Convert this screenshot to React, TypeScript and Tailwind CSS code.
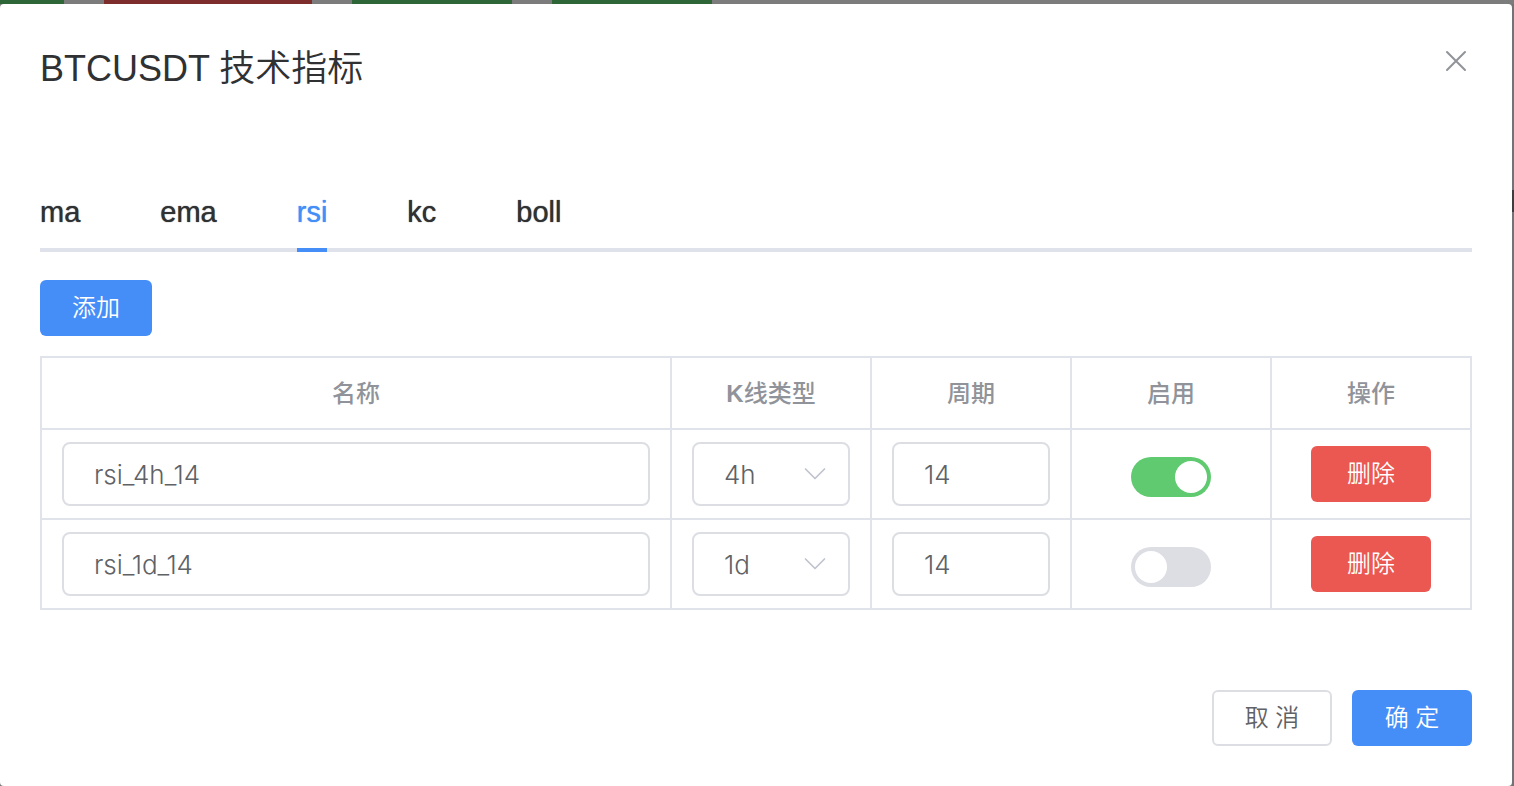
import { useState } from 'react'

type Row = { id: number; name: string; interval: string; period: string; enabled: boolean }

const tabs = ['ma', 'ema', 'rsi', 'kc', 'boll']
const intervals = ['1m', '5m', '15m', '1h', '4h', '1d']
const headings = [
  { key: 'name', label: '名称' },
  { key: 'interval', label: <><b>K</b>线类型</> },
  { key: 'period', label: '周期' },
  { key: 'enabled', label: '启用' },
  { key: 'actions', label: '操作' },
]
const cell = 'border-b-2 border-r-2 border-[#e0e4ea] px-5'
const field =
  'block h-16 w-full appearance-none rounded-lg border-2 border-[#dcdee3] bg-white pl-[30px] font-["Inter","Noto_Sans_CJK_SC",sans-serif] text-[26px] font-light text-[#606266] outline-none'

function BackdropTop() {
  return (
    <div className="flex h-1" aria-hidden="true">
      <div className="w-16 bg-[#2f6638]" />
      <div className="w-10" />
      <div className="w-52 bg-[#7d2e2c]" />
      <div className="w-10" />
      <div className="w-40 bg-[#2f6638]" />
      <div className="w-10" />
      <div className="w-40 bg-[#2f6638]" />
    </div>
  )
}

export default function App() {
  const [active, setActive] = useState('rsi')
  const [rows, setRows] = useState<Row[]>([
    { id: 1, name: 'rsi_4h_14', interval: '4h', period: '14', enabled: true },
    { id: 2, name: 'rsi_1d_14', interval: '1d', period: '14', enabled: false },
  ])
  const update = (id: number, patch: Partial<Row>) =>
    setRows(rows.map((r) => (r.id === id ? { ...r, ...patch } : r)))
  const add = () =>
    setRows([...rows, { id: Date.now(), name: '', interval: '4h', period: '14', enabled: false }])

  return (
    <div className='flex min-h-screen flex-col bg-[#7c7c7c] font-["Liberation_Sans","Noto_Sans_CJK_SC",sans-serif]'>
      <BackdropTop />
      <div className="flex grow">
        <div role="dialog" aria-labelledby="title" className="min-w-0 grow rounded bg-white px-10 pb-10 pt-10">
          <header className="flex h-12 items-start justify-between">
            <h1 id="title" className="text-4xl leading-[50px] text-[#303133]">
              BTCUSDT <span className="font-[350]">技术指标</span>
            </h1>
            <button type="button" aria-label="关闭" className="flex size-8 items-center justify-center text-[#909399]">
              <svg viewBox="0 0 24 24" className="size-6" fill="none" stroke="currentColor" strokeWidth="2" strokeLinecap="round">
                <path d="M3 4 21 22M21 4 3 22" />
              </svg>
            </button>
          </header>

          <nav role="tablist" className="mt-20 flex h-20 gap-20 text-[29px] shadow-[inset_0_-4px_0_#dfe2eb]">
            {tabs.map((t) => (
              <button
                key={t}
                type="button"
                role="tab"
                aria-selected={t === active}
                onClick={() => setActive(t)}
                className={
                  t === active
                    ? 'border-b-4 border-[#458ef7] pt-1.5 text-[#458ef7] [text-shadow:0_0_1px_currentColor]'
                    : 'border-b-4 border-transparent pt-1.5 text-[#303133] [text-shadow:0_0_1px_currentColor]'
                }
              >
                {t}
              </button>
            ))}
          </nav>

          <button type="button" onClick={add} className="mt-7 h-14 rounded-md bg-[#458ef7] px-8 text-2xl font-[350] text-white">
            添加
          </button>

          <table className="mt-5 w-full table-fixed border-separate border-spacing-0 border-l-2 border-t-2 border-[#e0e4ea]">
            <colgroup>
              <col />
              <col className="w-[200px]" />
              <col className="w-[200px]" />
              <col className="w-[200px]" />
              <col className="w-[200px]" />
            </colgroup>
            <thead>
              <tr className="h-[72px] text-2xl text-[#909399]">
                {headings.map((h) => (
                  <th key={h.key} scope="col" className={`${cell} pt-0.5 font-medium`}>
                    {h.label}
                  </th>
                ))}
              </tr>
            </thead>
            <tbody>
              {rows.map((r) => (
                <tr key={r.id} className="h-[90px]">
                  <td className={cell}>
                    <input aria-label="名称" className={field} value={r.name} onChange={(e) => update(r.id, { name: e.target.value })} />
                  </td>
                  <td className={cell}>
                    <div className="relative">
                      <select aria-label="K线类型" className={field} value={r.interval} onChange={(e) => update(r.id, { interval: e.target.value })}>
                        {intervals.map((i) => (
                          <option key={i}>{i}</option>
                        ))}
                      </select>
                      <svg
                        viewBox="0 0 24 24"
                        className="pointer-events-none absolute right-[23px] top-5 size-6"
                        fill="none"
                        stroke="#c0c4cc"
                        strokeWidth="1.7"
                        strokeLinecap="round"
                        strokeLinejoin="round"
                      >
                        <path d="M2.5 7 12 16.5 21.5 7" />
                      </svg>
                    </div>
                  </td>
                  <td className={cell}>
                    <input aria-label="周期" className={field} value={r.period} onChange={(e) => update(r.id, { period: e.target.value })} />
                  </td>
                  <td className={cell}>
                    <label className="flex justify-center pt-1.5">
                      <input
                        type="checkbox"
                        role="switch"
                        aria-label="启用"
                        checked={r.enabled}
                        onChange={(e) => update(r.id, { enabled: e.target.checked })}
                        className="peer sr-only"
                      />
                      <span className="flex h-10 w-20 rounded-full bg-[#dddee4] p-1 peer-checked:justify-end peer-checked:bg-[#5fca70]">
                        <span className="size-8 rounded-full bg-white" />
                      </span>
                    </label>
                  </td>
                  <td className={cell}>
                    <button
                      type="button"
                      onClick={() => setRows(rows.filter((x) => x.id !== r.id))}
                      className="mx-auto block h-14 w-[120px] rounded-md bg-[#ea5851] text-2xl font-[350] text-white"
                    >
                      删除
                    </button>
                  </td>
                </tr>
              ))}
            </tbody>
          </table>

          <footer className="mt-20 flex justify-end gap-5 text-2xl font-[350]">
            <button type="button" className="h-14 w-[120px] rounded-md border-2 border-[#dcdee3] bg-white text-[#606266]">
              取 消
            </button>
            <button type="button" className="h-14 w-[120px] rounded-md bg-[#458ef7] text-white">
              确 定
            </button>
          </footer>
        </div>
        <div className="w-0.5 shrink-0 bg-[#727376] pt-[186px]" aria-hidden="true">
          <div className="h-[22px] bg-[#3c3d3f]" />
        </div>
      </div>
    </div>
  )
}
